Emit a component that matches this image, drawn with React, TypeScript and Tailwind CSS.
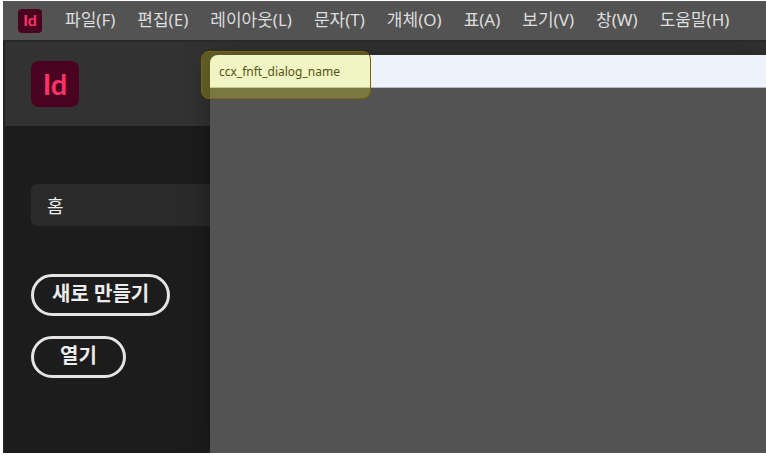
const menus = [
    { label: '파일(F)', key: 'F' },
    { label: '편집(E)', key: 'E' },
    { label: '레이아웃(L)', key: 'L' },
    { label: '문자(T)', key: 'T' },
    { label: '개체(O)', key: 'O' },
    { label: '표(A)', key: 'A' },
    { label: '보기(V)', key: 'V' },
    { label: '창(W)', key: 'W' },
    { label: '도움말(H)', key: 'H' },
];

function MenuBar() {
    return (
        <nav className="flex h-[41px] shrink-0 items-center border-b-2 border-[#292929] bg-[#535353] pl-[15px]">
            <span className="flex size-6 shrink-0 items-center justify-center rounded bg-[#49021f] pb-px font-['Lato',sans-serif] text-base leading-none font-bold text-[#ff3366]">
                Id
            </span>
            <div className="flex gap-[22px] pb-0.5 pl-[23px]">
                {menus.map((menu) => (
                    <button key={menu.key} type="button" accessKey={menu.key} className="text-[17px] leading-6 whitespace-nowrap text-[#dedede]">
                        {menu.label}
                    </button>
                ))}
            </div>
        </nav>
    );
}

function HomeScreen() {
    return (
        <div className="col-start-1 row-start-1 flex flex-col border-l-2 border-[#232323] bg-[#1c1c1c]">
            <header className="flex h-[84px] shrink-0 items-center bg-[#323232] pl-[26px]">
                <span className="flex h-[46px] w-12 items-center justify-center rounded-lg bg-[#49021f] pb-0.5 font-['Lato',sans-serif] text-[29px] leading-none font-bold text-[#ff3366]">
                    Id
                </span>
            </header>
            <div className="flex flex-col items-start pt-[58px] pl-[26px]">
                <a href="#home" className="flex h-[42px] w-full items-center rounded-l-md bg-[#2a2a2a] pt-0.5 pl-4 text-lg text-[#ececec]">
                    홈
                </a>
                <button type="button" className="mt-12 h-[42px] rounded-full border-3 border-[#e4e4e4] px-[18px] pb-0.5 text-xl leading-6 font-bold text-[#ececec]">
                    새로 만들기
                </button>
                <button type="button" className="mt-5 h-[42px] rounded-full border-3 border-[#e4e4e4] px-[26px] pb-0.5 text-xl leading-6 font-bold text-[#ececec]">
                    열기
                </button>
            </div>
        </div>
    );
}

function Dialog() {
    return (
        <section
            aria-labelledby="dialog-title"
            className="z-10 col-start-1 row-start-1 mt-[13px] ml-[207px] flex flex-col rounded-tl-lg bg-[#535353] shadow-[0_0_28px_rgba(0,0,0,0.35)]"
        >
            <div className="relative flex h-[33px] shrink-0 items-center rounded-tl-lg border-b border-[#b9bbbf] bg-[#edf2fb] pt-0.5 pl-[9px]">
                <h1 id="dialog-title" className="text-xs leading-4 text-[#222222]">
                    ccx_fnft_dialog_name
                </h1>
                {/* marker over the untranslated title */}
                <div className="absolute -top-1 -left-[9px] h-12 w-[170px] rounded-lg border border-[#806000] bg-[#ffff00]/22" />
            </div>
        </section>
    );
}

export default function App() {
    return (
        <div className="flex min-h-screen flex-col overflow-hidden bg-white pt-px pb-0.5 pl-[3px] font-['Noto_Sans','Noto_Sans_CJK_KR',sans-serif]">
            <MenuBar />
            <main className="grid flex-1 overflow-hidden">
                <HomeScreen />
                <Dialog />
            </main>
        </div>
    );
}
